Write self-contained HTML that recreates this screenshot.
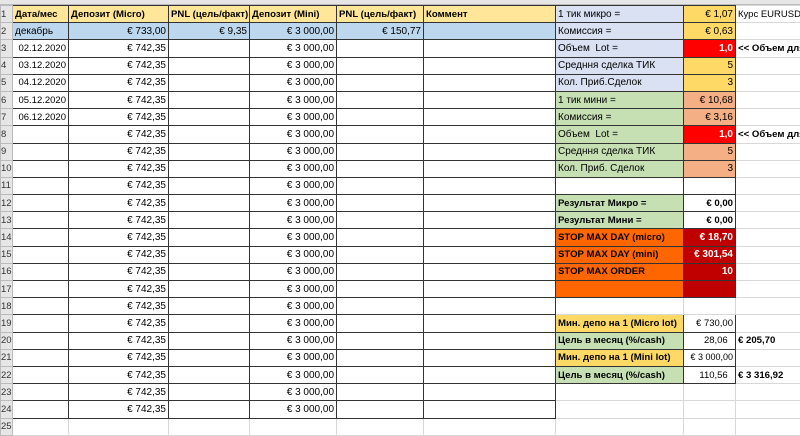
<!DOCTYPE html>
<html><head><meta charset="utf-8"><style>
body{margin:0;width:800px;height:428px;overflow:hidden;background:#fff;font-family:"Liberation Sans",sans-serif;font-size:10px;color:#000}
.top{position:absolute;left:0;top:0;width:800px;height:5px;background:#e6e6e6;border-bottom:1px solid #bbb;box-sizing:border-box}
table{position:absolute;left:0;top:5px;border-collapse:collapse;table-layout:fixed;width:800px}
td{border:1px solid #d8d8d8;padding:0 2px;height:16.2px;white-space:nowrap;overflow:hidden;line-height:15px}
td.h{background:#e6e6e6;border-color:#bbb;padding:0;font-size:9.5px;color:#333}
td.b{border:1px solid #333}
.r{text-align:right}
.bold{font-weight:bold;font-size:9.6px}
.y{background:#ffe699}.lb{background:#bdd7ee}.lv{background:#d9e1f2}.gd{background:#ffd966}
.rd{background:#ff0000;color:#fff;font-weight:bold}.gr{background:#c6e0b4}.pe{background:#f4b084}
.or{background:#ff6600;font-weight:bold;font-size:9.6px}.dr{background:#c00000;color:#fff;font-weight:bold}
.sm{font-size:9.5px}
</style></head><body>
<div class="top"></div>
<table>
<colgroup><col style="width:12px"><col style="width:56px"><col style="width:100px"><col style="width:81px"><col style="width:87px"><col style="width:87px"><col style="width:132px"><col style="width:128px"><col style="width:52px"><col style="width:65px"></colgroup>
<tr><td class="h">1</td><td class="b y bold">Дата/мес</td><td class="b y bold">Депозит (Micro)</td><td class="b y bold">PNL (цель/факт)</td><td class="b y bold">Депозит (Mini)</td><td class="b y bold">PNL (цель/факт)</td><td class="b y bold">Коммент</td><td class="b lv">1 тик микро =</td><td class="b gd r">€ 1,07</td><td class="sm">Курс EURUSD</td></tr>
<tr><td class="h">2</td><td class="b lb">декабрь</td><td class="b lb r">€ 733,00</td><td class="b lb r">€ 9,35</td><td class="b lb r">€ 3 000,00</td><td class="b lb r">€ 150,77</td><td class="b lb"></td><td class="b lv">Комиссия =</td><td class="b gd r">€ 0,63</td><td></td></tr>
<tr><td class="h">3</td><td class="b r sm">02.12.2020</td><td class="b r">€ 742,35</td><td class="b"></td><td class="b r">€ 3 000,00</td><td class="b"></td><td class="b"></td><td class="b lv">Объем&nbsp; Lot =</td><td class="b rd r">1,0</td><td class="bold">&lt;&lt; Объем для</td></tr>
<tr><td class="h">4</td><td class="b r sm">03.12.2020</td><td class="b r">€ 742,35</td><td class="b"></td><td class="b r">€ 3 000,00</td><td class="b"></td><td class="b"></td><td class="b lv">Средння сделка ТИК</td><td class="b gd r">5</td><td></td></tr>
<tr><td class="h">5</td><td class="b r sm">04.12.2020</td><td class="b r">€ 742,35</td><td class="b"></td><td class="b r">€ 3 000,00</td><td class="b"></td><td class="b"></td><td class="b lv">Кол. Приб.Сделок</td><td class="b gd r">3</td><td></td></tr>
<tr><td class="h">6</td><td class="b r sm">05.12.2020</td><td class="b r">€ 742,35</td><td class="b"></td><td class="b r">€ 3 000,00</td><td class="b"></td><td class="b"></td><td class="b gr">1 тик мини =</td><td class="b pe r">€ 10,68</td><td></td></tr>
<tr><td class="h">7</td><td class="b r sm">06.12.2020</td><td class="b r">€ 742,35</td><td class="b"></td><td class="b r">€ 3 000,00</td><td class="b"></td><td class="b"></td><td class="b gr">Комиссия =</td><td class="b pe r">€ 3,16</td><td></td></tr>
<tr><td class="h">8</td><td class="b"></td><td class="b r">€ 742,35</td><td class="b"></td><td class="b r">€ 3 000,00</td><td class="b"></td><td class="b"></td><td class="b gr">Объем&nbsp; Lot =</td><td class="b rd r">1,0</td><td class="bold">&lt;&lt; Объем для</td></tr>
<tr><td class="h">9</td><td class="b"></td><td class="b r">€ 742,35</td><td class="b"></td><td class="b r">€ 3 000,00</td><td class="b"></td><td class="b"></td><td class="b gr">Средння сделка ТИК</td><td class="b pe r">5</td><td></td></tr>
<tr><td class="h">10</td><td class="b"></td><td class="b r">€ 742,35</td><td class="b"></td><td class="b r">€ 3 000,00</td><td class="b"></td><td class="b"></td><td class="b gr">Кол. Приб. Сделок</td><td class="b pe r">3</td><td></td></tr>
<tr><td class="h">11</td><td class="b"></td><td class="b r">€ 742,35</td><td class="b"></td><td class="b r">€ 3 000,00</td><td class="b"></td><td class="b"></td><td class="b"></td><td class="b"></td><td></td></tr>
<tr><td class="h">12</td><td class="b"></td><td class="b r">€ 742,35</td><td class="b"></td><td class="b r">€ 3 000,00</td><td class="b"></td><td class="b"></td><td class="b gr bold">Результат Микро =</td><td class="b r bold">€ 0,00</td><td></td></tr>
<tr><td class="h">13</td><td class="b"></td><td class="b r">€ 742,35</td><td class="b"></td><td class="b r">€ 3 000,00</td><td class="b"></td><td class="b"></td><td class="b gr bold">Результат Мини =</td><td class="b r bold">€ 0,00</td><td></td></tr>
<tr><td class="h">14</td><td class="b"></td><td class="b r">€ 742,35</td><td class="b"></td><td class="b r">€ 3 000,00</td><td class="b"></td><td class="b"></td><td class="b or">STOP MAX DAY (micro)</td><td class="b dr r">€ 18,70</td><td></td></tr>
<tr><td class="h">15</td><td class="b"></td><td class="b r">€ 742,35</td><td class="b"></td><td class="b r">€ 3 000,00</td><td class="b"></td><td class="b"></td><td class="b or">STOP MAX DAY (mini)</td><td class="b dr r">€ 301,54</td><td></td></tr>
<tr><td class="h">16</td><td class="b"></td><td class="b r">€ 742,35</td><td class="b"></td><td class="b r">€ 3 000,00</td><td class="b"></td><td class="b"></td><td class="b or">STOP MAX ORDER</td><td class="b dr r">10</td><td></td></tr>
<tr><td class="h">17</td><td class="b"></td><td class="b r">€ 742,35</td><td class="b"></td><td class="b r">€ 3 000,00</td><td class="b"></td><td class="b"></td><td class="b or"></td><td class="b dr"></td><td></td></tr>
<tr><td class="h">18</td><td class="b"></td><td class="b r">€ 742,35</td><td class="b"></td><td class="b r">€ 3 000,00</td><td class="b"></td><td class="b"></td><td></td><td></td><td></td></tr>
<tr><td class="h">19</td><td class="b"></td><td class="b r">€ 742,35</td><td class="b"></td><td class="b r">€ 3 000,00</td><td class="b"></td><td class="b"></td><td class="b gd bold">Мин. депо на 1 (Micro lot)</td><td class="b r sm">€ 730,00</td><td></td></tr>
<tr><td class="h">20</td><td class="b"></td><td class="b r">€ 742,35</td><td class="b"></td><td class="b r">€ 3 000,00</td><td class="b"></td><td class="b"></td><td class="b gr bold">Цель в месяц (%/cash)</td><td class="b r sm">28,06&nbsp;&nbsp;</td><td class="bold">€ 205,70</td></tr>
<tr><td class="h">21</td><td class="b"></td><td class="b r">€ 742,35</td><td class="b"></td><td class="b r">€ 3 000,00</td><td class="b"></td><td class="b"></td><td class="b gd bold">Мин. депо на 1 (Mini lot)</td><td class="b r" style="font-size:9px">€ 3 000,00</td><td></td></tr>
<tr><td class="h">22</td><td class="b"></td><td class="b r">€ 742,35</td><td class="b"></td><td class="b r">€ 3 000,00</td><td class="b"></td><td class="b"></td><td class="b gr bold">Цель в месяц (%/cash)</td><td class="b r sm">110,56&nbsp;&nbsp;</td><td class="bold">€ 3 316,92</td></tr>
<tr><td class="h">23</td><td class="b"></td><td class="b r">€ 742,35</td><td class="b"></td><td class="b r">€ 3 000,00</td><td class="b"></td><td class="b"></td><td></td><td></td><td></td></tr>
<tr><td class="h">24</td><td class="b"></td><td class="b r">€ 742,35</td><td class="b"></td><td class="b r">€ 3 000,00</td><td class="b"></td><td class="b"></td><td></td><td></td><td></td></tr>
<tr><td class="h">25</td><td></td><td></td><td></td><td></td><td></td><td></td><td></td><td></td><td></td></tr>
</table>
</body></html>
